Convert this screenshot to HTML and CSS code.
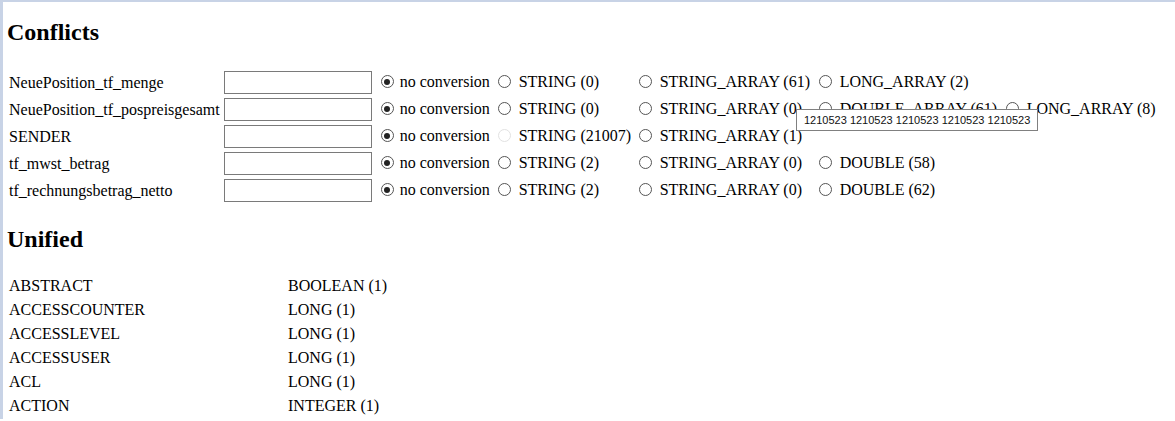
FILE: index.html
```html
<!DOCTYPE html>
<html lang="de">
<head>
  <meta charset="UTF-8" />
  <title>Conflicts</title>
  <link rel="stylesheet" href="styles.css">
</head>
<body>
<div class="page">

  <h2>Conflicts</h2>
  <table class="conflicts">
    <colgroup>
      <col class="c-name">
      <col class="c-field">
      <col class="c-none">
      <col class="c-string">
      <col class="c-array">
      <col class="c-other">
      <col>
    </colgroup>
    <tr>
      <td class="name">NeuePosition_tf_menge</td>
      <td><input type="text" class="field"></td>
      <td class="none"><label><input type="radio" name="r1" checked> no conversion</label></td>
      <td><label><input type="radio" name="r1"> STRING (0)</label></td>
      <td><label><input type="radio" name="r1"> STRING_ARRAY (61)</label></td>
      <td><label><input type="radio" name="r1"> LONG_ARRAY (2)</label></td>
      <td></td>
    </tr>
    <tr>
      <td class="name">NeuePosition_tf_pospreisgesamt</td>
      <td><input type="text" class="field"></td>
      <td class="none"><label><input type="radio" name="r2" checked> no conversion</label></td>
      <td><label><input type="radio" name="r2"> STRING (0)</label></td>
      <td><label><input type="radio" name="r2"> STRING_ARRAY (0)</label></td>
      <td><label><input type="radio" name="r2"> DOUBLE_ARRAY (61)</label></td>
      <td><label><input type="radio" name="r2"> LONG_ARRAY (8)</label></td>
    </tr>
    <tr>
      <td class="name">SENDER</td>
      <td><input type="text" class="field"></td>
      <td class="none"><label><input type="radio" name="r3" checked> no conversion</label></td>
      <td><label><input type="radio" name="r3" disabled> STRING (21007)</label></td>
      <td><label><input type="radio" name="r3"> STRING_ARRAY (1)</label></td>
      <td></td>
      <td></td>
    </tr>
    <tr>
      <td class="name">tf_mwst_betrag</td>
      <td><input type="text" class="field"></td>
      <td class="none"><label><input type="radio" name="r4" checked> no conversion</label></td>
      <td><label><input type="radio" name="r4"> STRING (2)</label></td>
      <td><label><input type="radio" name="r4"> STRING_ARRAY (0)</label></td>
      <td><label><input type="radio" name="r4"> DOUBLE (58)</label></td>
      <td></td>
    </tr>
    <tr>
      <td class="name">tf_rechnungsbetrag_netto</td>
      <td><input type="text" class="field"></td>
      <td class="none"><label><input type="radio" name="r5" checked> no conversion</label></td>
      <td><label><input type="radio" name="r5"> STRING (2)</label></td>
      <td><label><input type="radio" name="r5"> STRING_ARRAY (0)</label></td>
      <td><label><input type="radio" name="r5"> DOUBLE (62)</label></td>
      <td></td>
    </tr>
  </table>

  <h2>Unified</h2>
  <table class="unified">
    <tr><td class="key">ABSTRACT</td><td>BOOLEAN (1)</td></tr>
    <tr><td class="key">ACCESSCOUNTER</td><td>LONG (1)</td></tr>
    <tr><td class="key">ACCESSLEVEL</td><td>LONG (1)</td></tr>
    <tr><td class="key">ACCESSUSER</td><td>LONG (1)</td></tr>
    <tr><td class="key">ACL</td><td>LONG (1)</td></tr>
    <tr><td class="key">ACTION</td><td>INTEGER (1)</td></tr>
  </table>
</div>

<!-- tooltip of the hovered STRING (21007) option -->
<div class="tooltip">1210523 1210523 1210523 1210523 1210523</div>
</body>
</html>
```

FILE: styles.css
```css
html, body {
  margin: 0;
  padding: 0;
  background: #fff;
}
body {
  position: relative;
  font-family: 'Liberation Serif', 'Times New Roman', serif;
  font-size: 16px;
  color: #000;
  border-top: 2px solid #c8d3e6;
  border-left: 3px solid #c8d3e6;
  min-height: 419px;
  box-sizing: border-box;
}
.page {
  padding-left: 4px;
}
h2 {
  font-size: 24px;
  line-height: 28px;
  margin: 16px 0 23px 0;
}
.conflicts + h2 {
  margin-top: 21px;
  margin-bottom: 21px;
}

table {
  border-collapse: collapse;
}
td {
  padding: 0;
  white-space: nowrap;
}
.conflicts td {
  height: 27px;
}
.conflicts td.name {
  padding-left: 2px;
  padding-right: 4px;
}
.conflicts td:nth-child(2) {
  padding-right: 9px;
}
.c-none   { width: 117px; }
.c-string { width: 141px; }
.c-array  { width: 180px; }
.c-other  { width: 187px; }

.field {
  width: 148px;
  height: 23px;
  box-sizing: border-box;
  border: 1px solid #7a7a7a;
  margin: 0;
  padding: 0 2px;
  font-family: inherit;
  font-size: 16px;
  vertical-align: middle;
}
label {
  display: inline-flex;
  align-items: center;
  gap: 8px;
}
.none label {
  gap: 6px;
}
input[type="radio"] {
  appearance: none;
  -webkit-appearance: none;
  width: 13px;
  height: 13px;
  margin: 0;
  border: 1px solid #555;
  border-radius: 50%;
  background: #fff;
  box-sizing: border-box;
  position: relative;
}
input[type="radio"]:checked::after {
  content: "";
  position: absolute;
  left: 2.5px;
  top: 2.5px;
  width: 6px;
  height: 6px;
  border-radius: 50%;
  background: #222;
}
input[type="radio"]:disabled {
  border-color: #e2e2e2;
}

.unified td {
  height: 24px;
  padding-left: 2px;
}
.unified td.key {
  width: 277px;
}

.tooltip {
  position: absolute;
  left: 793px;
  top: 107px;
  height: 22px;
  box-sizing: border-box;
  padding: 0 7px;
  border: 1px solid #808080;
  background: #fff;
  font-family: 'Liberation Sans', Arial, sans-serif;
  font-size: 11px;
  line-height: 20px;
  color: #111;
  white-space: nowrap;
}
```
